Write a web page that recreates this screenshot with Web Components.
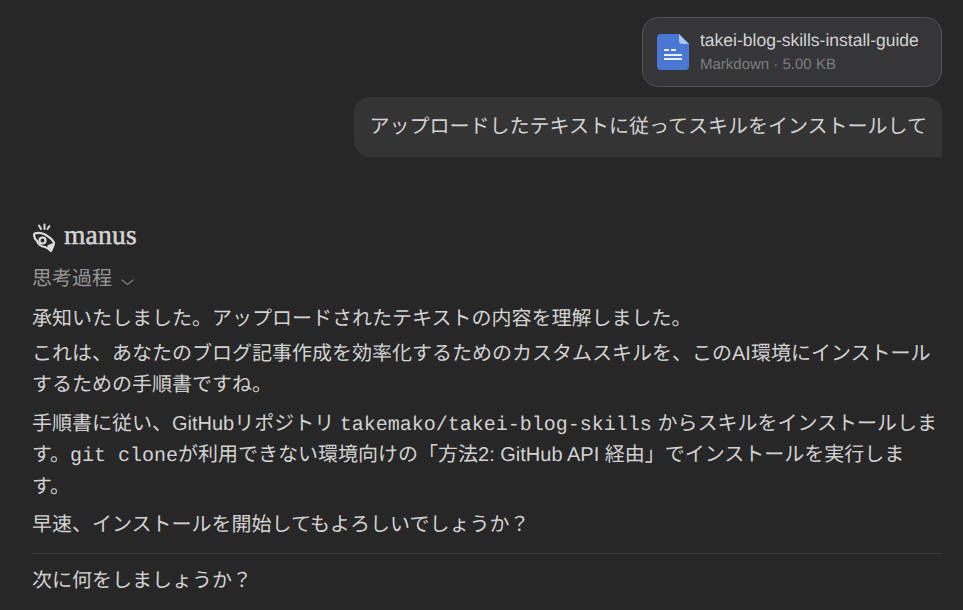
<!DOCTYPE html>
<html lang="ja">
<head>
<meta charset="utf-8">
<title>manus</title>
<style>
    html, body { margin: 0; background: #272727; }
    body {
        width: 963px;
        height: 610px;
        overflow: hidden;
        font-family: "Liberation Sans", "Noto Sans CJK JP", sans-serif;
        text-rendering: geometricPrecision;
        color: #d2d2d2;
    }
    code { font-family: "Liberation Mono", monospace; font-size: 20px; line-height: 1; }
</style>
</head>
<body>
<chat-thread>
    <user-message slot="user">
        <file-card slot="file" name="takei-blog-skills-install-guide" meta="Markdown · 5.00 KB"></file-card>
        アップロードしたテキストに従ってスキルをインストールして
    </user-message>
    <agent-reply slot="agent">
        <p class="tight">承知いたしました。アップロードされたテキストの内容を理解しました。</p>
        <p>これは、あなたのブログ記事作成を効率化するためのカスタムスキルを、このAI環境にインストールするための手順書ですね。</p>
        <p>手順書に従い、GitHubリポジトリ <code>takemako/takei-blog-skills</code> からスキルをインストールします。<code>git clone</code>が利用できない環境向けの「方法2: GitHub API 経由」でインストールを実行します。</p>
        <p>早速、インストールを開始してもよろしいでしょうか？</p>
    </agent-reply>
    <next-prompt slot="next">次に何をしましょうか？</next-prompt>
</chat-thread>

<script>
    /**
     * Page column, holds the user message, the reply and the closing prompt
     */
    class ChatThread extends HTMLElement {
        constructor() {
            super();
            this.attachShadow({ mode: 'open' });
            this.shadowRoot.innerHTML = `
                <style>
                    :host {
                        display: flex;
                        flex-direction: column;
                        padding: 17px 21px 0 32px;
                    }
                </style>
                <slot name="user"></slot>
                <slot name="agent"></slot>
                <slot name="next"></slot>
            `;
        }
    }

    /**
     * Attachment card with document icon
     */
    class FileCard extends HTMLElement {
        constructor() {
            super();
            this.attachShadow({ mode: 'open' });
        }

        connectedCallback() {
            this.shadowRoot.innerHTML = `
                <style>
                    :host {
                        display: flex;
                        align-items: center;
                        gap: 11px;
                        box-sizing: border-box;
                        width: 300px;
                        height: 70px;
                        padding: 0 14px;
                        background: #363638;
                        border: 1px solid #515153;
                        border-radius: 16px;
                    }
                    svg { flex: none; display: block; }
                    .text { padding-bottom: 2px; }
                    .name { font-size: 17.5px; line-height: 24px; color: #d2d2d2; white-space: nowrap; }
                    .meta { font-size: 15px; line-height: 20px; margin-top: 3px; color: #7c7c7e; white-space: nowrap; }
                </style>
                <svg width="32" height="36" viewBox="0 0 32 36">
                    <path d="M4 0H22L32 10V32a4 4 0 0 1-4 4H4a4 4 0 0 1-4-4V4a4 4 0 0 1 4-4Z" fill="#4a76d4"/>
                    <path d="M22 0L32 10H25a3 3 0 0 1-3-3Z" fill="#a9c5f3"/>
                    <path d="M7 15h5v2H7ZM14 15h5v2h-5ZM7 20h18v2H7ZM7 24h18v2H7Z" fill="#e8eefb"/>
                </svg>
                <div class="text">
                    <div class="name">${this.getAttribute('name')}</div>
                    <div class="meta">${this.getAttribute('meta')}</div>
                </div>
            `;
        }
    }

    /**
     * Right aligned user message, attachment above the bubble
     */
    class UserMessage extends HTMLElement {
        constructor() {
            super();
            this.attachShadow({ mode: 'open' });
            this.shadowRoot.innerHTML = `
                <style>
                    :host {
                        display: flex;
                        flex-direction: column;
                        align-items: flex-end;
                        gap: 10px;
                    }
                    .bubble {
                        box-sizing: border-box;
                        height: 60px;
                        padding: 14px 15px 0 16px;
                        font-size: 20px;
                        line-height: 32px;
                        color: #d2d2d2;
                        background: #343434;
                        border-radius: 16px 16px 0 16px;
                        white-space: nowrap;
                    }
                </style>
                <slot name="file"></slot>
                <div class="bubble"><slot></slot></div>
            `;
        }
    }

    /**
     * Agent reply: logo row, collapsed thinking toggle, then the paragraphs
     */
    class AgentReply extends HTMLElement {
        constructor() {
            super();
            this.attachShadow({ mode: 'open' });
            this.shadowRoot.innerHTML = `
                <style>
                    :host {
                        display: block;
                        margin-top: 63px;
                        font-size: 20px;
                        line-height: 31.5px;
                        color: #d2d2d2;
                    }
                    .brand { display: flex; align-items: center; gap: 8px; height: 32px; }
                    .brand svg { margin-top: 3px; }
                    .word {
                        font-family: "Liberation Serif", serif;
                        font-size: 27.5px;
                        line-height: 30px;
                        padding-bottom: 2px;
                        color: #d4d4d4;
                        letter-spacing: 0.2px;
                        -webkit-text-stroke: 0.5px #d4d4d4;
                    }
                    .thinking {
                        display: flex;
                        align-items: center;
                        gap: 9px;
                        height: 32px;
                        margin-top: 12px;
                        color: #959595;
                    }
                    .thinking svg { margin-top: 4px; }
                    .body { margin-top: 8px; }
                    ::slotted(p) { margin: 0 0 7px; }
                    ::slotted(p.tight) { margin-bottom: 3px; }
                    ::slotted(p:last-child) { margin-bottom: 0; }
                </style>
                <div class="brand">
                    <svg width="24" height="30" viewBox="0 0 24 30" fill="none" stroke="#dcdcdc" stroke-linecap="round" stroke-linejoin="round">
                        <path d="M7 2.500L9 6M12.500 1.500V6M17.500 3L15.500 6" stroke-width="2"/>
                        <path d="M2.500 10.500C6 9.500 10 10 13 11.500C17 14 21 16 22 20C22 23 20 25 19 28C17 26 15 24.500 13 24C9 23.500 6 21 5 18C3 16 1.500 13 2.500 10.500Z" stroke-width="2.200"/>
                        <circle cx="10.500" cy="17.500" r="3" stroke-width="2.200"/>
                        <path d="M16 23L20.500 21L19 27Z" fill="#dcdcdc" stroke-width="1.500"/>
                    </svg>
                    <span class="word">manus</span>
                </div>
                <div class="thinking">思考過程
                    <svg width="13" height="7" viewBox="0 0 13 7" fill="none" stroke="#7e7e7e" stroke-width="1.200" stroke-linecap="round" stroke-linejoin="round"><path d="M1 1L6.500 5.500L12 1"/></svg>
                </div>
                <div class="body"><slot></slot></div>
            `;
        }
    }

    /**
     * Closing question under a hairline
     */
    class NextPrompt extends HTMLElement {
        constructor() {
            super();
            this.attachShadow({ mode: 'open' });
            this.shadowRoot.innerHTML = `
                <style>
                    :host {
                        display: block;
                        margin-top: 11.5px;
                        padding-top: 11px;
                        border-top: 1px solid #3c3c3c;
                        font-size: 20px;
                        line-height: 32px;
                        color: #d2d2d2;
                    }
                </style>
                <slot></slot>
            `;
        }
    }

    customElements.define('chat-thread', ChatThread);
    customElements.define('file-card', FileCard);
    customElements.define('user-message', UserMessage);
    customElements.define('agent-reply', AgentReply);
    customElements.define('next-prompt', NextPrompt);
</script>
</body>
</html>
